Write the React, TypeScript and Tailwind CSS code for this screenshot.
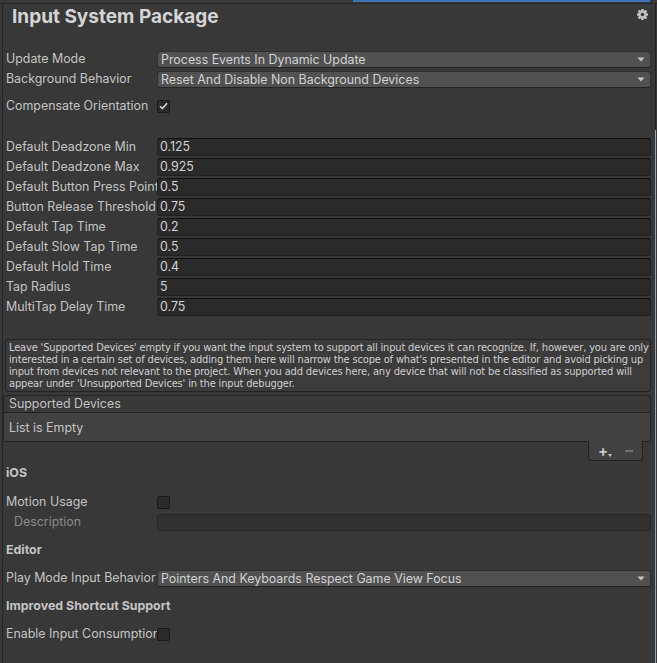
import React from "react";

const UI = "Inter, 'Noto Sans', sans-serif";

function Label({ children, dim, indent }: { children: React.ReactNode; dim?: boolean; indent?: boolean }) {
  return (
    <div
      className={`w-[151px] shrink-0 overflow-hidden whitespace-nowrap text-[12.4px] leading-[18px] ${dim ? "text-[#8b8b8b]" : "text-[#c4c4c4]"} ${indent ? "pl-[8px]" : ""}`}
    >
      {children}
    </div>
  );
}

function Arrow() {
  return (
    <svg width="8" height="5" viewBox="0 0 8 5" className="shrink-0">
      <path d="M0.5 0.5 L7.5 0.5 L4 4.5 Z" fill="#c4c4c4" />
    </svg>
  );
}

function Dropdown({ label, value }: { label: string; value: string }) {
  return (
    <div className="flex h-[18px] items-center pl-[3px] pr-[3px]">
      <Label>{label}</Label>
      <div className="flex h-[17px] min-w-0 flex-1 items-center justify-between rounded-[3px] border border-[#303030] border-b-[#242424] bg-[#515151] pl-[3px] pr-[5px]">
        <span className="whitespace-nowrap text-[12.4px] leading-[15px] text-[#d2d2d2]">{value}</span>
        <Arrow />
      </div>
    </div>
  );
}

function NumberRow({ label, value }: { label: string; value: string }) {
  return (
    <div className="flex h-[18px] items-center pl-[3px] pr-[3px]">
      <Label>{label}</Label>
      <div className="flex h-[18px] min-w-0 flex-1 items-center rounded-[3px] border border-[#212121] border-t-[#0f0f0f] bg-[#2a2a2a] pl-[2px]">
        <span className="text-[12.4px] leading-[16px] text-[#d2d2d2]">{value}</span>
      </div>
    </div>
  );
}

function Checkbox({ checked }: { checked?: boolean }) {
  return (
    <div className="flex h-[13px] w-[13px] items-center justify-center rounded-[2px] border border-[#1a1a1a] bg-[#2b2b2b]">
      {checked && (
        <svg width="9" height="8" viewBox="0 0 9 8">
          <path d="M1 4.2 L3.4 6.5 L8 1.3" stroke="#e6e6e6" strokeWidth="1.4" fill="none" />
        </svg>
      )}
    </div>
  );
}

function CheckRow({ label, checked }: { label: string; checked?: boolean }) {
  return (
    <div className="flex h-[18px] items-center pl-[3px] pr-[3px]">
      <Label>{label}</Label>
      <div className="flex items-center">
        <Checkbox checked={checked} />
      </div>
    </div>
  );
}

function Heading({ children }: { children: React.ReactNode }) {
  return (
    <div className="h-[18px] pl-[3px] text-[12.4px] font-bold leading-[18px] text-[#c4c4c4]">{children}</div>
  );
}

function Gear() {
  const teeth = [0, 45, 90, 135];
  return (
    <svg width="11" height="11" viewBox="0 0 11 11">
      <g fill="#c2c2c2">
        {teeth.map((a) => (
          <rect key={a} x="4.2" y="0" width="2.6" height="11" rx="0.6" transform={`rotate(${a} 5.5 5.5)`} />
        ))}
        <circle cx="5.5" cy="5.5" r="4" />
      </g>
      <circle cx="5.5" cy="5.5" r="1.7" fill="#383838" />
    </svg>
  );
}

const helpLines = [
  "Leave 'Supported Devices' empty if you want the input system to support all input devices it can recognize. If, however, you are only",
  "interested in a certain set of devices, adding them here will narrow the scope of what's presented in the editor and avoid picking up",
  "input from devices not relevant to the project. When you add devices here, any device that will not be classified as supported will",
  "appear under 'Unsupported Devices' in the input debugger.",
];

export default function App() {
  return (
    <div className="flex h-[663px] w-[657px] flex-col overflow-hidden bg-[#383838]" style={{ fontFamily: UI }}>
      <div className="flex h-[2px] shrink-0">
        <div className="w-[353px]" />
        <div className="w-[297px] bg-[#3b74b4]" />
      </div>
      <div className="h-[1px] shrink-0" />
      <div className="h-[1px] shrink-0 bg-[#262626]" />
      <div className="flex min-h-0 flex-1">
        <div className="w-[2px] shrink-0" />
        <div className="w-[1px] shrink-0 bg-[#262626]" />
        <div className="flex min-w-0 flex-1 flex-col overflow-hidden">
          {/* Title */}
          <div className="flex h-[46px] items-start justify-between">
            <div className="pl-[9px] pt-[1px] text-[19px] font-bold leading-[24px] text-[#d4d4d4]">
              Input System Package
            </div>
            <div className="mr-[6px] mt-[5px]">
              <Gear />
            </div>
          </div>

          <Dropdown label="Update Mode" value="Process Events In Dynamic Update" />
          <div className="mt-[2px]">
            <Dropdown label="Background Behavior" value="Reset And Disable Non Background Devices" />
          </div>
          <div className="mt-[9px]">
            <CheckRow label="Compensate Orientation" checked />
          </div>

          <div className="mt-[23px] flex flex-col gap-[2px]">
            <NumberRow label="Default Deadzone Min" value="0.125" />
            <NumberRow label="Default Deadzone Max" value="0.925" />
            <NumberRow label="Default Button Press Point" value="0.5" />
            <NumberRow label="Button Release Threshold" value="0.75" />
            <NumberRow label="Default Tap Time" value="0.2" />
            <NumberRow label="Default Slow Tap Time" value="0.5" />
            <NumberRow label="Default Hold Time" value="0.4" />
            <NumberRow label="Tap Radius" value="5" />
            <NumberRow label="MultiTap Delay Time" value="0.75" />
          </div>

          {/* Help box */}
          <div className="ml-[2px] mr-[3px] mt-[23px] overflow-hidden rounded-[3px] border border-[#232323] bg-[#3b3b3b] pb-[1px] pl-[3px] pt-[2px]">
            {helpLines.map((l, i) => (
              <div
                key={i}
                className="whitespace-nowrap text-[11px] leading-[12px] tracking-[-0.16px] text-[#cfcfcf]"
                style={{ fontFamily: "'Liberation Sans Narrow', 'DejaVu Sans Condensed', 'Roboto Condensed', Roboto, sans-serif" }}
              >
                {l}
              </div>
            ))}
          </div>

          {/* Supported devices list */}
          <div className="mr-[3px] mt-[3px] flex flex-col">
            <div className="h-[18px] rounded-t-[3px] border border-[#232323] bg-[#393939] pl-[5px] text-[12.4px] leading-[16px] text-[#c4c4c4]">
              Supported Devices
            </div>
            <div className="-mt-[1px] flex h-[30px] items-center rounded-b-[3px] border border-[#232323] bg-[#414141] pl-[5px] pt-[2px] text-[12.4px] text-[#c4c4c4]">
              List is Empty
            </div>
            <div className="-mt-[1px] mr-[8px] flex h-[20px] w-[55px] items-center self-end rounded-b-[4px] border border-t-0 border-[#232323] bg-[#414141]">
              <div className="ml-[9px] flex items-end">
                <span className="text-[15px] font-bold leading-[14px] text-[#c8c8c8]">+</span>
                <svg width="4" height="3" viewBox="0 0 4 3" className="mb-[1px]">
                  <path d="M0 0 L4 0 L2 3 Z" fill="#c8c8c8" />
                </svg>
              </div>
              <div className="ml-[13px] h-[2px] w-[8px] bg-[#6e6e6e]" />
            </div>
          </div>

          <div className="mt-[3px]">
            <Heading>iOS</Heading>
          </div>
          <div className="mt-[11px]">
            <CheckRow label="Motion Usage" />
          </div>
          <div className="mt-[2px] flex h-[18px] items-center pl-[3px] pr-[3px]">
            <Label dim indent>
              Description
            </Label>
            <div className="h-[17px] flex-1 rounded-[3px] border border-[#262626] bg-[#313131]" />
          </div>
          <div className="mt-[10px]">
            <Heading>Editor</Heading>
          </div>
          <div className="mt-[10px]">
            <Dropdown label="Play Mode Input Behavior" value="Pointers And Keyboards Respect Game View Focus" />
          </div>
          <div className="mt-[10px]">
            <Heading>Improved Shortcut Support</Heading>
          </div>
          <div className="mt-[10px]">
            <CheckRow label="Enable Input Consumption" />
          </div>
        </div>
        <div className="flex w-[3px] shrink-0 flex-row">
          <div className="w-[1px]" />
          <div className="flex w-[1px] flex-col">
            <div className="h-[126px] bg-[#222222]" />
            <div className="flex-1 bg-[#8ea6b4]" />
          </div>
          <div className="w-[1px]" />
        </div>
      </div>
    </div>
  );
}
